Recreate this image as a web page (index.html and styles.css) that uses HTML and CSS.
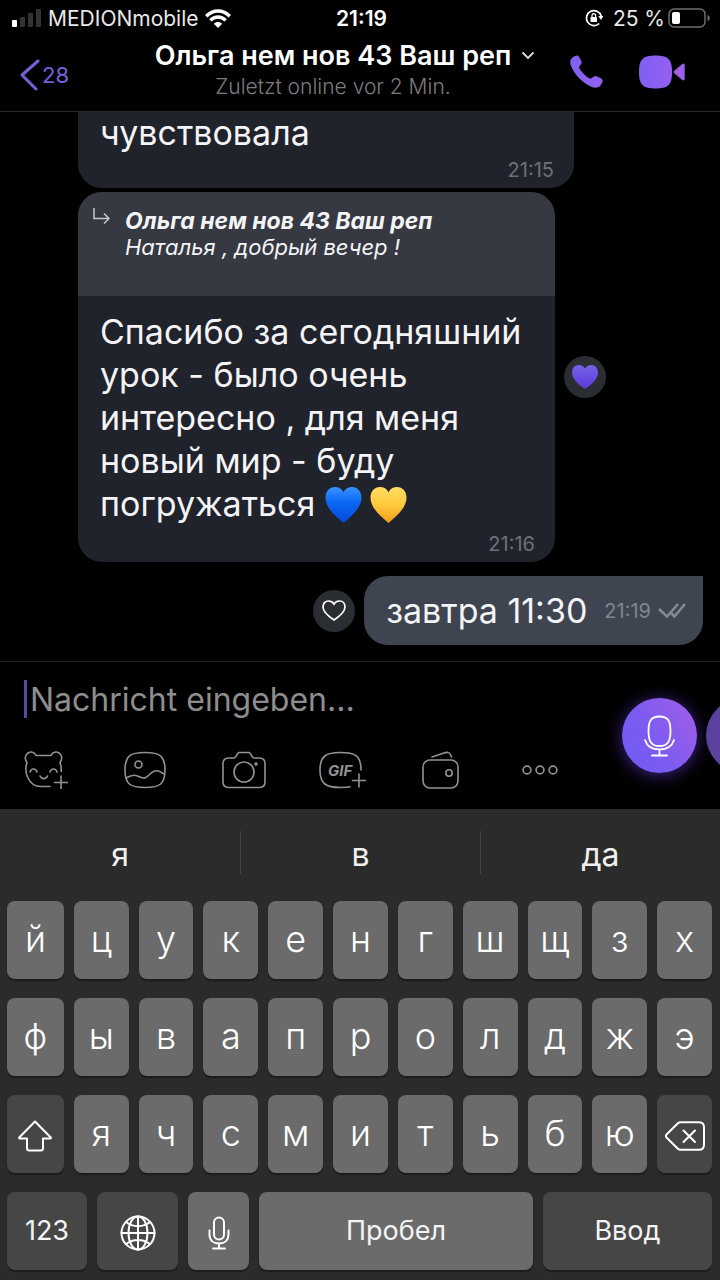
FILE: index.html
```html
<!DOCTYPE html>
<html lang="ru">
<head>
<meta charset="utf-8">
<meta name="viewport" content="width=device-width, initial-scale=1">
<title>Ольга нем нов 43 Ваш реп</title>
<link rel="stylesheet" href="styles.css">
</head>
<body>
<svg class="defs" aria-hidden="true">
  <defs>
    <linearGradient id="violet" x1="0" y1="0" x2="1" y2="0"><stop offset="0" stop-color="#7f61f2"/><stop offset="1" stop-color="#955ff0"/></linearGradient>
    <linearGradient id="blue" x1="0" y1="0" x2="0" y2="1"><stop offset="0" stop-color="#3c93ff"/><stop offset=".4" stop-color="#0b6af5"/><stop offset="1" stop-color="#0648d8"/></linearGradient>
    <linearGradient id="yellow" x1="0" y1="0" x2="0" y2="1"><stop offset="0" stop-color="#ffdc62"/><stop offset=".5" stop-color="#ffc93c"/><stop offset="1" stop-color="#f59a1c"/></linearGradient>
    <linearGradient id="purple" x1="0" y1="0" x2="0" y2="1"><stop offset="0" stop-color="#7862e8"/><stop offset="1" stop-color="#5a3bd8"/></linearGradient>
  </defs>
</svg>
<header class="top">
  <div class="status">
    <div class="status-left">
      <svg width="30" height="18" viewBox="0 0 30 18" aria-hidden="true"><rect x="0" y="11" width="5" height="7" rx="1" fill="#fff"/><rect x="8" y="8" width="5" height="10" rx="1" fill="#333"/><rect x="16" y="4" width="5" height="14" rx="1" fill="#333"/><rect x="24" y="0" width="5" height="18" rx="1" fill="#333"/></svg>
      <span>MEDIONmobile</span>
      <svg width="26" height="19" viewBox="0 0 26 19" fill="none" stroke="#fff" stroke-width="3.4" aria-hidden="true"><path d="M1.2 7.2C8 .3 18 .3 24.800 7.200"/><path d="M5.300 11.400c4.500-4.500 10.900-4.500 15.400 0"/><path d="M13 19l-4.200-4.300c2.500-2.300 5.900-2.300 8.400 0z" fill="#fff" stroke="none"/></svg>
    </div>
    <span class="clock">21:19</span>
    <div class="status-right">
      <svg width="19" height="18" viewBox="0 0 19 18" fill="none" stroke="#fff" stroke-width="1.700" aria-hidden="true"><path d="M16.200 7a7.500 7.500 0 1 0-2 7.500"/><path d="M13.300 7h5l-2.300 4z" fill="#fff" stroke="none"/><rect x="5.500" y="8" width="6.500" height="5" rx=".7" fill="#fff" stroke="none"/><path d="M7 8V6.500a1.800 1.800 0 0 1 3.600 0V8" stroke-width="1.300"/></svg>
      <span>25 %</span>
      <svg width="43" height="20" viewBox="0 0 43 20" aria-hidden="true"><rect x="1" y="1" width="36" height="18" rx="5" fill="none" stroke="#6e6e6e" stroke-width="1.500"/><rect x="4" y="4" width="8" height="12" rx="2" fill="#fff"/><path d="M39.500 7c3 1 3 5 0 6z" fill="#6e6e6e"/></svg>
    </div>
  </div>
  <nav class="nav">
    <button class="back" aria-label="Zurück"><svg width="20" height="32" viewBox="0 0 20 32" fill="none" stroke="#7660d8" stroke-width="3" stroke-linecap="round" stroke-linejoin="round"><path d="M18 2L2 16l14 14"/></svg><span>28</span></button>
    <div class="peer">
      <h1>Ольга нем нов 43 Ваш реп <svg width="14" height="9" viewBox="0 0 14 9" fill="none" stroke="#ddd" stroke-width="1.800"><path d="M1.500 1.500L7 7l5.500-5.500"/></svg></h1>
      <p>Zuletzt online vor 2 Min.</p>
    </div>
    <div class="calls">
      <button aria-label="Anrufen"><svg width="33" height="33" viewBox="0 0 33 33"><path d="M1.500 3.500C3.500 1.500 6 .2 7.500.500c1.500.5 4 5.500 4.200 7 .2 1.800-2.700 3.200-2.600 5 .1 2.500 8.700 11 11.300 11.100 1.700.1 3-2.700 5-2.600 1.900.2 6.600 2.400 7.200 4 .5 1.700-1.500 5.500-3.300 6.800-1.500 1-5 1.200-8 0C12.500 28 3.500 18.500.700 10-.2 7.500.2 4.800 1.500 3.500z" fill="url(#violet)"/></svg></button>
      <button aria-label="Videoanruf"><svg width="46" height="34" viewBox="0 0 46 34"><path d="M16.500.5C29 .5 33 4 33 17s-4 16.500-16.500 16.500S0 30 0 17 4 .5 16.500.5z" fill="url(#violet)"/><path d="M35.500 15.500l7.500-6.300c1.500-1.200 2.700-.5 2.700 1.300v13c0 1.800-1.200 2.500-2.700 1.300l-7.500-6.300c-1-1-1-2 0-3z" fill="#a05fe9"/></svg></button>
    </div>
  </nav>
</header>

<main class="chat">
  <div class="row">
    <article class="bubble first"><p class="text">чувствовала</p><time>21:15</time></article>
  </div>
  <div class="row">
    <article class="bubble second">
      <blockquote class="quote">
        <svg width="18" height="17" viewBox="0 0 18 17" fill="none" stroke="#c8c8cc" stroke-width="1.500"><path d="M1 0v10.500h15M11 5.500l5 5-5 5"/></svg>
        <div><strong>Ольга нем нов 43 Ваш реп</strong><p>Наталья , добрый вечер !</p></div>
      </blockquote>
      <div class="body">
        <p class="text">Спасибо за сегодняшний<br>урок - было очень<br>интересно , для меня<br>новый мир - буду<br>погружаться <span class="hearts"><svg viewBox="0 0 36 36" role="img" aria-label="Blaues Herz"><path d="M18 36C12 30.500 0 22 0 10.500 0 4.500 4 0 9.500 0 13.500 0 16.800 2.200 18 5.500 19.200 2.200 22.500 0 26.500 0 32 0 36 4.500 36 10.500 36 22 24 30.500 18 36z" fill="url(#blue)"/></svg><svg viewBox="0 0 36 36" role="img" aria-label="Gelbes Herz"><path d="M18 36C12 30.500 0 22 0 10.500 0 4.500 4 0 9.500 0 13.500 0 16.800 2.200 18 5.500 19.200 2.200 22.500 0 26.500 0 32 0 36 4.500 36 10.500 36 22 24 30.500 18 36z" fill="url(#yellow)"/></svg></span></p>
        <time>21:16</time>
      </div>
    </article>
    <button class="react" aria-label="Gefällt mir"><svg width="26" height="24" viewBox="0 0 26 24"><path d="M13 24C8 20.500 0 15 0 7.500 0 3 3 0 6.800 0 9.700 0 12.100 1.500 13 3.700 13.900 1.500 16.300 0 19.200 0 23 0 26 3 26 7.500 26 15 18 20.500 13 24z" fill="url(#purple)"/></svg></button>
  </div>
  <div class="row own">
    <button class="react" aria-label="Gefällt mir"><svg width="24" height="21" viewBox="0 0 24 21" fill="none" stroke="#fff" stroke-width="1.700"><path d="M12 20C7.500 17 1 12.500 1 7c0-3.500 2.300-6 5.500-6C9 1 11 2.200 12 4c1-1.800 3-3 5.500-3C20.700 1 23 3.500 23 7c0 5.500-6.500 10-11 13z"/></svg></button>
    <article class="bubble third"><p class="text">завтра 11:30</p><time>21:19</time><svg width="28" height="15" viewBox="0 0 28 15" fill="none" stroke="#858b97" stroke-width="2.500" aria-label="Gelesen"><path d="M1 6l8 7.500L20 1M13.500 10.500l3 3L27 1"/></svg></article>
  </div>
</main>

<form class="composer">
  <div class="compose-main">
    <input class="message" type="text" placeholder="Nachricht eingeben..." aria-label="Nachricht eingeben...">
    <div class="tools">
      <button type="button" aria-label="Sticker"><svg width="44" height="38" viewBox="0 0 44 38"><path d="M12 4.500h15M12 4.500C10.500.8 6.500.3 4 2 1 4 .3 8 3 11.500M27 4.500c1.500-3.700 5.500-4.200 8-2.500 3 2 3.700 6 1 9.500M3 11.500c-1.700 5-1.300 11 1 15.500 2.500 5.500 7 8.500 13 8.500h9M36 11.500c1.200 3 1.400 5.500 1.200 9M6 21c1-4 6-4 7 0M26 21c1-4 6-4 7 0M16 25c1.500 3.500 6 3.500 7.500 0M37 25v13M30.500 31.500h13"/></svg></button>
      <button type="button" aria-label="Galerie"><svg width="42" height="38" viewBox="0 0 42 38"><path d="M21 1.500c15 0 20 3.500 20 17.500s-5 17.500-20 17.500S1 33 1 19 6 1.500 21 1.500zM2 27c7-4 10-3 14-1 4 2 6 1 9-2 6-6 9-5 15-1"/><circle cx="14.500" cy="13.500" r="3.500"/></svg></button>
      <button type="button" aria-label="Kamera"><svg width="44" height="38" viewBox="0 0 44 38"><path d="M7 7h5c2.500 0 2.500-5 5-5.500h10c2.500.5 2.500 5.500 5 5.500h5c3.500 0 6 2 6 5.500V31c0 3.500-2.500 5.500-6 5.500H7c-3.500 0-6-2-6-5.500V12.500C1 9 3.500 7 7 7z"/><circle cx="22" cy="21" r="10"/><circle cx="34" cy="13" r="1" fill="#999"/></svg></button>
      <button type="button" aria-label="GIF"><svg width="47" height="38" viewBox="0 0 47 38"><path d="M42 19C42 4.500 36 1.500 21.500 1.500S1 5 1 19s6 17.500 20.500 17.500c4 0 7-.2 9.500-.7M40 23v13M33.500 29.500h13"/><text x="9" y="25">GIF</text></svg></button>
      <button type="button" aria-label="Wallet"><svg width="38" height="38" viewBox="0 0 38 38"><rect x="1" y="9" width="35" height="28" rx="7"/><circle cx="27" cy="22" r="3.200"/><path d="M10 6l12-4c4-1.300 6-1 7.500 4"/></svg></button>
      <button type="button" aria-label="Mehr"><svg width="38" height="38" viewBox="0 0 38 38"><circle cx="6" cy="19" r="3.900"/><circle cx="19" cy="19" r="3.900"/><circle cx="32" cy="19" r="3.900"/></svg></button>
    </div>
  </div>
  <div class="record">
    <button type="button" class="orb" aria-label="Sprachnachricht"><svg width="31" height="42" viewBox="0 0 31 42" fill="none" stroke="#fff" stroke-width="1.800" stroke-linecap="round"><path d="M15.500 1.500c8 0 11 4 11 14.500s-3 15-11 15-11-4.500-11-15 3-14.500 11-14.500zM1 25c2 6.500 7 9.500 14.500 9.500S28 31.500 30 25M15.500 34.500v6M8 40.500h15"/></svg></button>
    <button type="button" class="orb dim" aria-label="Videonachricht"></button>
  </div>
</form>

<section class="keyboard" aria-label="Tastatur">
  <div class="suggest"><button>я</button><button>в</button><button>да</button></div>
  <div class="keys">
    <button>й</button><button>ц</button><button>у</button><button>к</button><button>е</button><button>н</button><button>г</button><button>ш</button><button>щ</button><button>з</button><button>х</button>
    <button>ф</button><button>ы</button><button>в</button><button>а</button><button>п</button><button>р</button><button>о</button><button>л</button><button>д</button><button>ж</button><button>э</button>
    <button class="dark icon" aria-label="Shift"><svg width="34" height="32" viewBox="0 0 34 32"><path d="M17 1.500L1.200 17.500c-.4.600 0 1 .5 1h7.300V28c0 1.500.8 2.500 2.300 2.500h11.400c1.500 0 2.300-1 2.300-2.500v-9.500h7.300c.5 0 .9-.4.500-1z"/></svg></button><button>я</button><button>ч</button><button>с</button><button>м</button><button>и</button><button>т</button><button>ь</button><button>б</button><button>ю</button><button class="dark icon" aria-label="Löschen"><svg width="40" height="30" viewBox="0 0 40 30"><path d="M15.500 1.200H34c3.300 0 5 1.800 5 5v17.600c0 3.200-1.700 5-5 5H15.500c-1 0-1.800-.3-2.600-1L1.500 16.500c-.8-.9-.8-2 0-3L12.900 2.200c.8-.7 1.600-1 2.600-1zM18.500 9.500L30 21M30 9.500L18.500 21"/></svg></button>
  </div>
  <div class="keys bottom">
    <button class="dark">123</button>
    <button class="dark icon" aria-label="Sprache wechseln"><svg width="36" height="36" viewBox="0 0 36 36"><circle cx="18" cy="18" r="16.500"/><ellipse cx="18" cy="18" rx="9.500" ry="16.500"/><path d="M18 1.500v33M1.500 18h33M6 7c7 5.500 17 5.500 24 0M6 29c7-5.500 17-5.500 24 0"/></svg></button>
    <button class="icon" aria-label="Diktieren"><svg width="22" height="34" viewBox="0 0 22 34"><rect x="6" y="1.500" width="10" height="22" rx="5"/><path d="M1.500 14.500v4c0 5.500 3.500 9 9.500 9s9.500-3.500 9.500-9v-4M11 27.500v5M5 32.500h12"/></svg></button>
    <button>Пробел</button>
    <button class="dark">Ввод</button>
  </div>
</section>
</body>
</html>
```
FILE: styles.css
```css
* { box-sizing: border-box; }
body {
  margin: 0;
  height: 100vh;
  display: flex;
  flex-direction: column;
  overflow: hidden;
  background: #000;
  color: #fff;
  font-family: Inter, "Noto Sans", sans-serif;
}
button {
  border: 0;
  padding: 0;
  background: none;
  color: inherit;
  font: inherit;
  display: flex;
  align-items: center;
  justify-content: center;
}
p, h1, blockquote { margin: 0; }
svg { flex: none; }
.defs { position: absolute; width: 0; height: 0; }

.top { border-bottom: 1px solid #29292d; flex: none; }
.status {
  display: grid;
  grid-template-columns: 1fr auto 1fr;
  align-items: center;
  height: 36px;
  padding: 0 9px 0 12px;
  font-size: 21px;
  color: #e8e8e8;
}
.status-left, .status-right { display: flex; align-items: center; gap: 6px; }
.status-right { justify-content: flex-end; gap: 9px; }
.status-right span { margin-right: -6px; }
.clock { font-weight: 600; color: #fff; }
.nav {
  display: grid;
  grid-template-columns: 94px 1fr 124px;
  align-items: center;
  height: 75px;
  padding-bottom: 4px;
}
.back { justify-content: flex-start; gap: 2px; padding: 6px 0 0 20px; color: #7660d8; font-size: 22px; }
.peer { text-align: center; white-space: nowrap; display: flex; flex-direction: column; align-items: center; padding-bottom: 4px; }
.peer h1 { font-size: 27px; line-height: 34px; font-weight: 600; display: flex; align-items: center; gap: 10px; }
.peer p { font-size: 21px; line-height: 28px; color: #7c7c80; font-weight: 300; padding-right: 24px; }
.calls { display: flex; align-items: center; justify-content: flex-end; gap: 36px; padding-right: 35px; }

.chat {
  flex: 1;
  min-height: 0;
  overflow: hidden;
  display: flex;
  flex-direction: column;
  justify-content: flex-end;
  gap: 4px;
  padding: 0 17px 16px 78px;
}
.row { display: flex; align-items: center; gap: 9px; flex: none; }
.own { justify-content: flex-end; margin-top: 10px; }
.bubble { background: #20232b; border-radius: 24px; overflow: hidden; }
.text { font-size: 34px; line-height: 43px; color: #f4f4f6; white-space: nowrap; }
time { font-size: 20px; line-height: 24px; color: #6d7078; }
.first { width: 496px; padding: 12px 20px 6px 22px; border-radius: 0 0 24px 24px; }
.first .text { line-height: 36px; }
.first time, .body time { display: block; text-align: right; padding-top: 7px; }
.second { width: 477px; }
.quote { display: flex; align-items: flex-start; gap: 14px; height: 104px; padding: 16px 15px; background: #363941; font-style: italic; color: #f4f4f6; }
.quote strong, .quote p { display: block; font-size: 23px; line-height: 26px; }
.quote strong { font-weight: 700; }
.quote p { font-size: 22px; }
.body { padding: 14px 20px 6px 22px; }
.hearts { display: inline-flex; gap: 8px; height: 36px; vertical-align: -7px; }
.hearts svg { width: 37px; height: 36px; }
.third {
  display: flex;
  align-items: center;
  height: 69px;
  padding: 0 17px 0 22px;
  background: #3f4550;
  border-radius: 24px 0 24px 24px;
}
.third time { margin: 0 7px 0 17px; color: #80858f; }
.react { width: 42px; height: 42px; border-radius: 50%; background: #2a2d31; flex: none; }

.composer {
  flex: none;
  display: grid;
  grid-template-columns: 1fr 158px;
  height: 148px;
  border-top: 1px solid #242427;
  overflow: hidden;
}
.compose-main { padding: 18px 0 0 24px; display: flex; flex-direction: column; gap: 33px; }
.message {
  width: 100%;
  height: 38px;
  border: 0;
  border-left: 3px solid #5b47a8;
  outline: 0;
  padding: 0 0 0 3px;
  background: none;
  color: #fff;
  font: 32px Inter, sans-serif;
}
.message::placeholder { color: #8e8e8e; opacity: 1; }
.tools { display: flex; justify-content: space-between; align-items: center; }
.tools button { width: 44px; }
.tools svg { fill: none; stroke: #929292; stroke-width: 1.6; stroke-linecap: round; stroke-linejoin: round; }
.tools text { fill: #929292; stroke: none; font: italic 700 15px Inter, sans-serif; }
.record { display: flex; gap: 9px; padding: 36px 0 0 60px; }
.orb {
  flex: none;
  width: 75px;
  height: 75px;
  border-radius: 50%;
  background: linear-gradient(60deg, #6d5cf6, #7e5bf0 45%, #a45fe8);
  box-shadow: 0 2px 16px #40248c;
}
.dim { background: #5c419f; box-shadow: none; }

.keyboard { flex: none; background: #2b2b2b; padding: 0 8px 10px 7px; }
.suggest { display: grid; grid-template-columns: repeat(3, 1fr); margin: 0 -8px 0 -7px; padding: 22px 0 27px; }
.suggest button { height: 43px; padding-top: 4px; font-size: 32px; color: #f0f0f0; }
.suggest button + button { border-left: 1px solid #444; }
.keys { display: grid; grid-template-columns: 57fr repeat(10, 55fr); gap: 19px 10px; }
.keys button {
  height: 78px;
  min-width: 0;
  border-radius: 8px;
  background: #6b6b6b;
  box-shadow: 0 2px 1px #1c1c1c;
  font-size: 36px;
  font-weight: 300;
  padding-bottom: 2px;
}
.keys .dark { background: #464646; }
.keys .icon { padding: 3px 0 0; }
.keys svg { fill: none; stroke: #fff; stroke-width: 2; stroke-linecap: round; stroke-linejoin: round; }
.bottom { grid-template-columns: 80fr 81fr 61fr 274fr 169fr; margin-top: 19px; }
.bottom button { font-size: 27px; font-weight: 400; color: #f4f4f4; }
```
